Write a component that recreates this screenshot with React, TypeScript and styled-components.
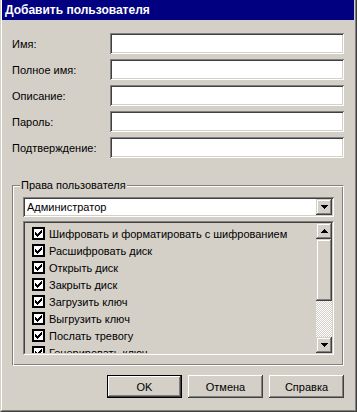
import React from "react";
import styled, { createGlobalStyle } from "styled-components";

const FACE = "#d4d0c8";

const GlobalStyle = createGlobalStyle`
  body {
    margin: 0;
    background: ${FACE};
    font-family: "Liberation Sans", Arial, sans-serif;
    font-size: 11px;
    color: #000;
  }
`;

const Window = styled.div`
  width: 357px;
  height: 412px;
  box-sizing: border-box;
  border-left: 1px solid ${FACE};
  border-right: 1px solid #404040;
  border-bottom: 1px solid #404040;
  background: ${FACE};
`;

const Frame = styled.div`
  height: 100%;
  box-sizing: border-box;
  border-left: 1px solid #fff;
  border-right: 1px solid #808080;
  border-bottom: 1px solid #808080;
  padding-right: 1px;
  display: flex;
  flex-direction: column;
`;

const TitleBar = styled.div`
  height: 20px;
  line-height: 20px;
  background: #000080;
  color: #fff;
  font-weight: bold;
  font-size: 12px;
  padding-left: 3px;
  white-space: nowrap;
`;

const Body = styled.div`
  padding: 13px 10px 0 10px;
  display: flex;
  flex-direction: column;
`;

const Form = styled.div`
  display: grid;
  grid-template-columns: 98px 1fr;
  grid-auto-rows: 21px;
  row-gap: 5px;
`;

const Label = styled.label`
  display: flex;
  align-items: center;
  white-space: nowrap;
`;

const sunken = `
  box-shadow: inset 1px 1px #808080, inset -1px -1px #fff,
    inset 2px 2px #404040, inset -2px -2px ${FACE};
`;

const raised = `
  box-shadow: inset -1px -1px #404040, inset 1px 1px ${FACE},
    inset -2px -2px #808080, inset 2px 2px #fff;
`;

const TextField = styled.input`
  appearance: none;
  border: none;
  outline: none;
  margin: 0;
  padding: 0 4px;
  height: 21px;
  width: 100%;
  box-sizing: border-box;
  background: #fff;
  font: inherit;
  ${sunken}
`;

const Group = styled.fieldset`
  margin: 21px 0 0 0;
  padding: 5px 9px 10px 10px;
  min-width: 0;
  border: 1px solid;
  border-color: #808080 #fff #fff #808080;
  box-shadow: inset 1px 1px #fff, inset -1px -1px #808080;
`;

const Legend = styled.legend`
  margin-left: -3px;
  padding: 0 1px;
  line-height: 13px;
  background: ${FACE};
`;

const Combo = styled.div`
  height: 20px;
  box-sizing: border-box;
  background: #fff;
  display: flex;
  align-items: center;
  padding: 2px 2px 2px 4px;
  margin-bottom: 4px;
  ${sunken}
`;

const ComboText = styled.span`
  flex: 1;
`;

const ArrowButton = styled.div<{ $h?: number }>`
  width: 16px;
  height: ${(p) => p.$h ?? 16}px;
  flex-shrink: 0;
  background: ${FACE};
  display: flex;
  align-items: center;
  justify-content: center;
  ${raised}
`;

const ListOuter = styled.div`
  height: 134px;
  box-sizing: border-box;
  border: 1px solid;
  border-color: #808080 #fff #fff #808080;
`;

const ListInner = styled.div`
  height: 100%;
  box-sizing: border-box;
  border: 1px solid;
  border-color: #404040 ${FACE} ${FACE} #404040;
  display: flex;
`;

const Items = styled.div`
  flex: 1;
  overflow: hidden;
  padding: 2px 0 0 7px;
`;

const Item = styled.div`
  height: 17px;
  display: flex;
  align-items: center;
  gap: 4px;
  white-space: nowrap;
`;

const CheckBox = styled.span`
  width: 13px;
  height: 13px;
  box-sizing: border-box;
  border: 2px solid #000;
  background: #fff;
  display: flex;
  align-items: center;
  justify-content: center;
  flex-shrink: 0;
`;

const ScrollBar = styled.div`
  width: 16px;
  display: flex;
  flex-direction: column;
`;

const Track = styled.div`
  flex: 1;
  background-color: ${FACE};
  background-image: conic-gradient(#fff 25%, ${FACE} 0 50%, #fff 0 75%, ${FACE} 0);
  background-size: 2px 2px;
`;

const ButtonRow = styled.div`
  display: flex;
  justify-content: flex-end;
  gap: 6px;
  margin-top: 9px;
`;

const PushButton = styled.button<{ $default?: boolean }>`
  appearance: none;
  width: 75px;
  height: 23px;
  margin: 0;
  padding: 0;
  font: inherit;
  color: #000;
  background: ${FACE};
  border: ${(p) => (p.$default ? "1px solid #000" : "none")};
  box-shadow: inset -1px -1px #404040, inset 1px 1px #fff,
    inset -2px -2px #808080, inset 2px 2px ${FACE};
`;

const Arrow: React.FC<{ up?: boolean }> = ({ up }) => (
  <svg width="7" height="4" viewBox="0 0 7 4" shapeRendering="crispEdges">
    <g fill="#000" transform={up ? "matrix(1 0 0 -1 0 4)" : undefined}>
      <rect x="0" y="0" width="7" height="1" />
      <rect x="1" y="1" width="5" height="1" />
      <rect x="2" y="2" width="3" height="1" />
      <rect x="3" y="3" width="1" height="1" />
    </g>
  </svg>
);

const Check = () => (
  <svg width="7" height="7" viewBox="0 0 7 7" shapeRendering="crispEdges">
    <path
      fill="#000"
      d="M6 0h1v3h-1v1h-1v1h-1v1h-1v1h-1v-1h-1v-1h-1v-3h1v1h1v1h1v-1h1v-1h1v-1h1z"
    />
  </svg>
);

const fields = ["Имя:", "Полное имя:", "Описание:", "Пароль:", "Подтверждение:"];

const rights = [
  "Шифровать и форматировать с шифрованием",
  "Расшифровать диск",
  "Открыть диск",
  "Закрыть диск",
  "Загрузить ключ",
  "Выгрузить ключ",
  "Послать тревогу",
  "Генерировать ключ",
];

export default function App() {
  return (
    <>
      <GlobalStyle />
      <Window>
        <Frame>
          <TitleBar>Добавить пользователя</TitleBar>
          <Body>
            <Form>
              {fields.map((f) => (
                <React.Fragment key={f}>
                  <Label>{f}</Label>
                  <TextField type={f === "Пароль:" || f === "Подтверждение:" ? "password" : "text"} />
                </React.Fragment>
              ))}
            </Form>

            <Group>
              <Legend>Права пользователя</Legend>
              <Combo>
                <ComboText>Администратор</ComboText>
                <ArrowButton>
                  <Arrow />
                </ArrowButton>
              </Combo>
              <ListOuter>
                <ListInner>
                  <Items>
                    {rights.map((r) => (
                      <Item key={r}>
                        <CheckBox>
                          <Check />
                        </CheckBox>
                        {r}
                      </Item>
                    ))}
                  </Items>
                  <ScrollBar>
                    <ArrowButton>
                      <Arrow up />
                    </ArrowButton>
                    <ArrowButton $h={62} />
                    <Track />
                    <ArrowButton>
                      <Arrow />
                    </ArrowButton>
                  </ScrollBar>
                </ListInner>
              </ListOuter>
            </Group>

            <ButtonRow>
              <PushButton $default>OK</PushButton>
              <PushButton>Отмена</PushButton>
              <PushButton>Справка</PushButton>
            </ButtonRow>
          </Body>
        </Frame>
      </Window>
    </>
  );
}
